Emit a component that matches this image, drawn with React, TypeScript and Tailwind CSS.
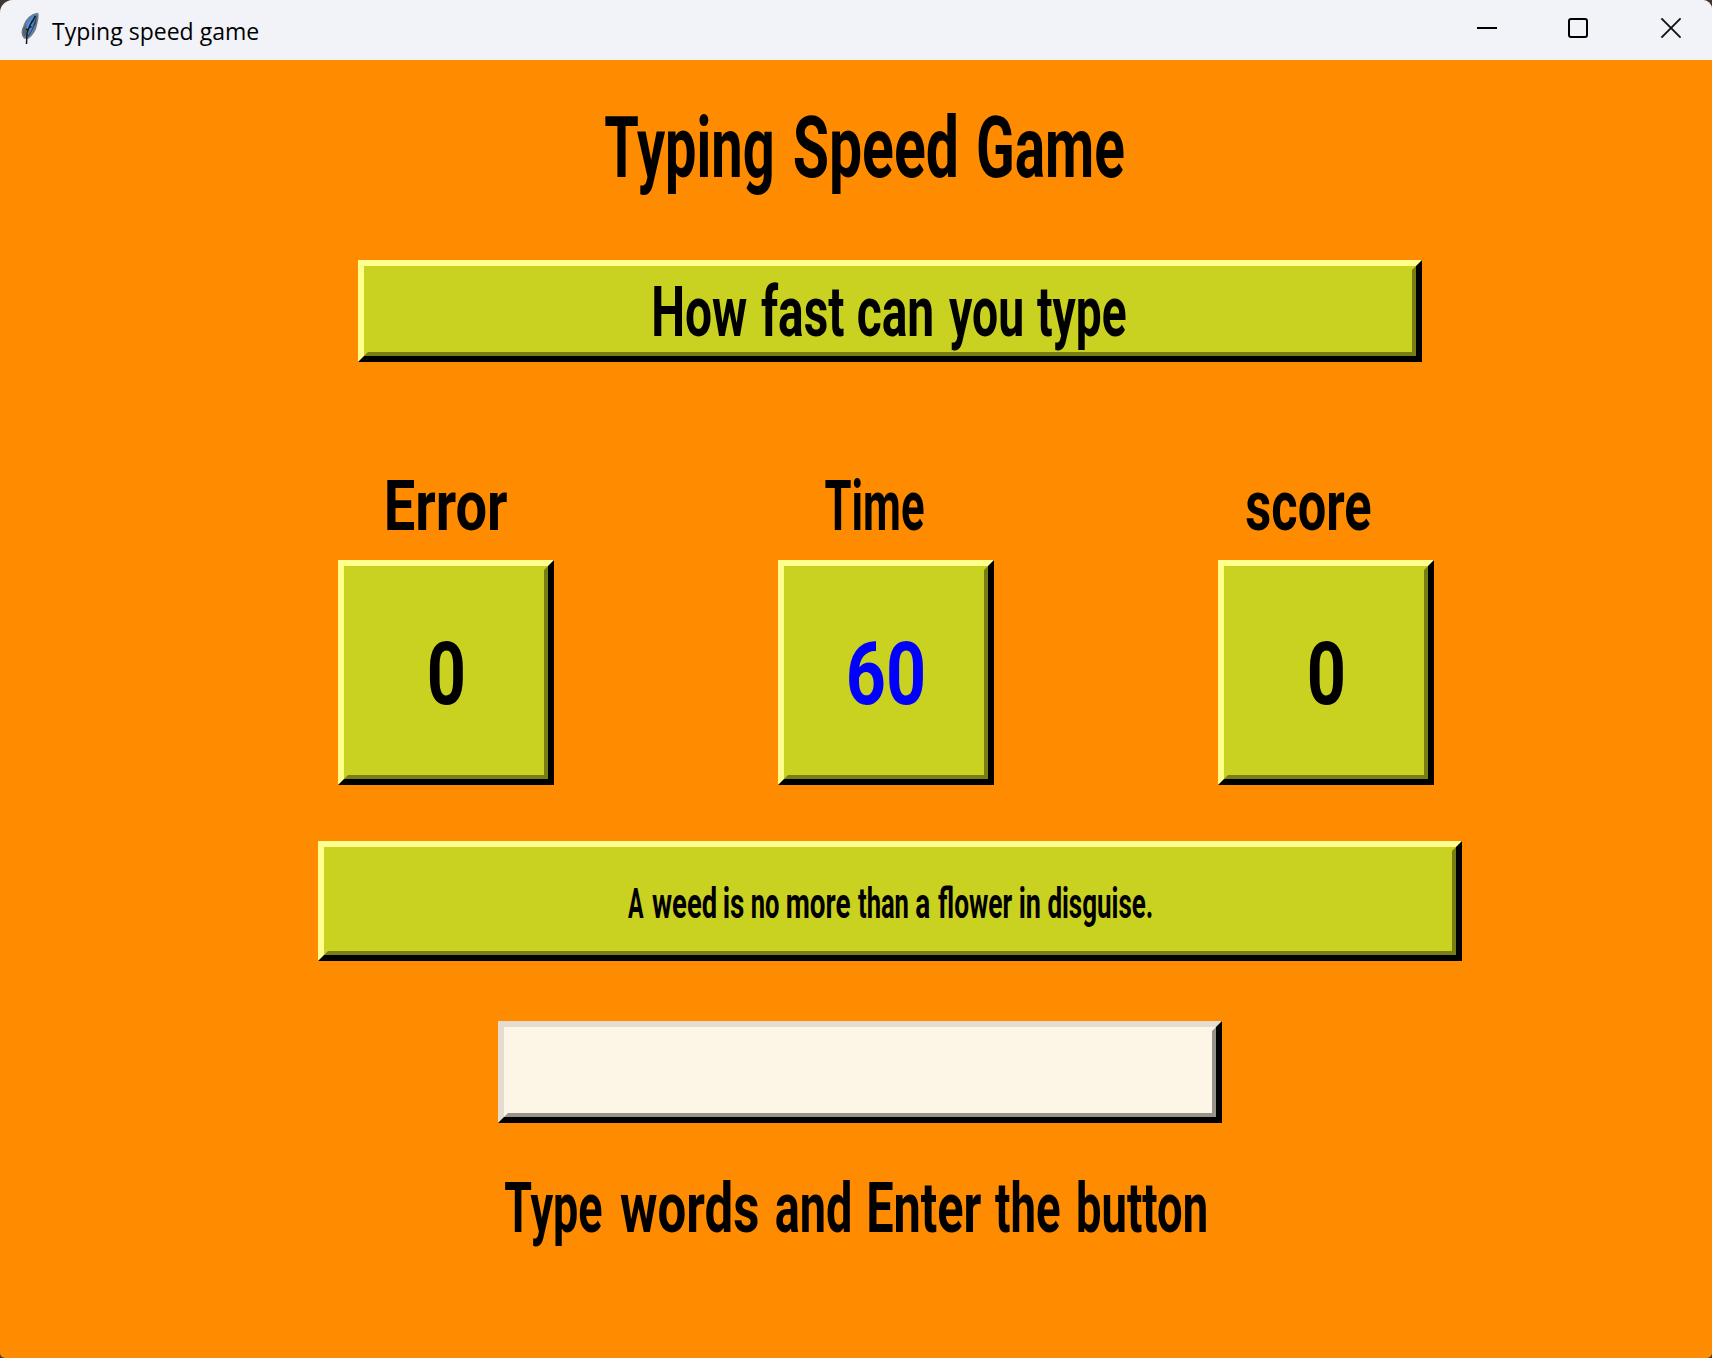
import { useLayoutEffect, useRef, useState, type ReactNode } from "react";

/** A word whose drawn letters are condensed to fill the width of its box. */
function Word({ children, className }: { children: string; className: string }) {
  const box = useRef<HTMLSpanElement>(null);
  const [fit, setFit] = useState({ scale: 1, shift: 0 });

  useLayoutEffect(() => {
    const el = box.current;
    const ctx = document.createElement("canvas").getContext("2d");
    if (!el || !ctx) return;
    const s = getComputedStyle(el);
    ctx.font = `${s.fontWeight} ${s.fontSize} ${s.fontFamily}`;
    const m = ctx.measureText(children);
    const ink = m.actualBoundingBoxLeft + m.actualBoundingBoxRight;
    const scale = el.getBoundingClientRect().width / ink;
    setFit({ scale, shift: m.actualBoundingBoxLeft * scale });
  }, [children]);

  return (
    <span ref={box} className={`block shrink-0 ${className}`}>
      <span
        className="inline-block origin-left whitespace-nowrap"
        style={{ transform: `translateX(${fit.shift}px) scaleX(${fit.scale})` }}
      >
        {children}
      </span>
    </span>
  );
}

function Panel({ children, className }: { children?: ReactNode; className: string }) {
  return (
    <div
      className={`border-6 border-t-[#ffff8e] border-l-[#ffff8e] border-r-black border-b-black ${className}`}
    >
      <div className="h-full border-4 border-t-[#cad221] border-l-[#cad221] border-r-[#797e14] border-b-[#797e14] bg-[#cad221]">
        {children}
      </div>
    </div>
  );
}

function Feather() {
  return (
    <svg className="ml-[20px] mt-[12px] h-[33px] w-[20px] shrink-0" viewBox="0 0 20 33" fill="none">
      <path d="M17.5 1.5C12 2 6 7 4 14C2 18 2 23 4.500 26L8 26C12 23 15.500 18 16.500 12C17.500 8 18.500 4 17.500 1.500Z" fill="#4b86ca" stroke="#747b82" strokeWidth="1.6" />
      <path d="M5 25L2.500 22L3 17L6 12L7 18L6 24Z" fill="#59636d" />
      <path d="M17 3L16 11L12.500 18L9 24L7 25L12 17L13.500 12L15 8Z" fill="#33465a" />
      <path d="M14 5L9 10L6 17L9 16L13 9Z" fill="#5c9be5" />
      <path d="M15.500 4L10 13L7 21L6.500 32M11 10L13 9M9 15L11.500 15M8 18L6 17" stroke="#15191e" strokeWidth="1.5" />
    </svg>
  );
}

function TitleBar() {
  return (
    <header className="flex h-[60px] items-start bg-[#f1f3f9] text-black">
      <Feather />
      <h1 className="ml-[12px] flex pt-[14.5px] font-['Open_Sans','Noto_Sans',sans-serif] text-[23.5px] leading-[33px]">
        <Word className="w-[206px]">Typing speed game</Word>
      </h1>
      <div className="ml-auto mr-[31px] flex gap-[71px] pt-[18px]">
        <button aria-label="Minimize">
          <svg className="h-5 w-5" viewBox="0 0 20 20">
            <path d="M0 10H20" stroke="#000" strokeWidth="2" />
          </svg>
        </button>
        <button aria-label="Maximize">
          <svg className="h-5 w-5" viewBox="0 0 20 20">
            <rect x="1" y="1" width="18" height="18" rx="2" fill="none" stroke="#000" strokeWidth="2" />
          </svg>
        </button>
        <button aria-label="Close" className="ml-[2px]">
          <svg className="h-5 w-5" viewBox="0 0 20 20">
            <path d="M.4 .4L19.600 19.600M19.600 .4L.4 19.600" stroke="#111" strokeWidth="1.9" />
          </svg>
        </button>
      </div>
    </header>
  );
}

export default function App() {
  return (
    <div className="h-[1358px] w-[1712px] bg-[#3b3838]">
      <div className="h-full overflow-hidden rounded-tl-[13px] rounded-tr-[9px] rounded-b-[5px] bg-[#ff8c00]">
        <TitleBar />
        <main className="flex flex-col items-start font-['Roboto','Liberation_Sans',sans-serif] font-bold text-black">
          <h2 className="mt-[57px] ml-[605px] flex h-[62px] gap-[22px] text-[86px] leading-[62px]">
            <Word className="w-[167px]">Typing</Word>
            <Word className="w-[162px]">Speed</Word>
            <Word className="w-[146px]">Game</Word>
          </h2>

          <Panel className="mt-[81px] ml-[358px] h-[102px] w-[1064px]">
            <p className="ml-[286px] flex pt-[17px] text-[70px] leading-[50px]">
              <Word className="w-[93px]">How</Word>
              <Word className="ml-[14px] w-[83px]">fast</Word>
              <Word className="ml-[14px] w-[74px]">can</Word>
              <Word className="ml-[17px] w-[73px]">you</Word>
              <Word className="ml-[15px] w-[89px]">type</Word>
            </p>
          </Panel>

          <div className="mt-[119px] ml-[338px] grid grid-cols-[216px_216px_216px] gap-x-[224px]">
            <section>
              <h3 className="ml-[49px] h-[50px] text-[70px] leading-[50px]">
                <Word className="w-[120px]">Error</Word>
              </h3>
              <Panel className="mt-[29px] h-[225px] w-[216px]">
                <p className="ml-[82px] pt-[73px] text-[87px] leading-[62px]">
                  <Word className="w-[33px]">0</Word>
                </p>
              </Panel>
            </section>
            <section>
              <h3 className="ml-[47px] h-[50px] text-[70px] leading-[50px]">
                <Word className="w-[99px]">Time</Word>
              </h3>
              <Panel className="mt-[29px] h-[225px] w-[216px]">
                <p className="ml-[61px] pt-[73px] text-[87px] leading-[62px] text-[#0000ff]">
                  <Word className="w-[74px]">60</Word>
                </p>
              </Panel>
            </section>
            <section>
              <h3 className="ml-[28px] h-[50px] text-[70px] leading-[50px]">
                <Word className="w-[125px]">score</Word>
              </h3>
              <Panel className="mt-[29px] h-[225px] w-[216px]">
                <p className="ml-[82px] pt-[73px] text-[87px] leading-[62px]">
                  <Word className="w-[33px]">0</Word>
                </p>
              </Panel>
            </section>
          </div>

          <Panel className="mt-[56px] ml-[318px] h-[120px] w-[1144px]">
            <p className="ml-[300px] flex gap-[8px] pt-[37.5px] text-[42px] leading-[30px]">
              <Word className="w-[16px]">A</Word>
              <Word className="w-[64px]">weed</Word>
              <Word className="w-[20px]">is</Word>
              <Word className="w-[27px]">no</Word>
              <Word className="w-[63px]">more</Word>
              <Word className="w-[50px]">than</Word>
              <Word className="w-[14px]">a</Word>
              <Word className="w-[74px]">flower</Word>
              <Word className="w-[20px]">in</Word>
              <Word className="w-[104px]">disguise.</Word>
            </p>
          </Panel>

          <div className="mt-[60px] ml-[498px] h-[102px] w-[724px] border-6 border-t-[#e4dcce] border-l-[#e4dcce] border-r-black border-b-black">
            <input
              aria-label="Typed words"
              className="block h-full w-full border-4 border-t-[#fdf5e6] border-l-[#fdf5e6] border-r-[#98938a] border-b-[#98938a] bg-[#fdf5e6] px-2 text-[42px] outline-none"
            />
          </div>

          <p className="mt-[60px] ml-[505px] flex h-[50px] text-[70px] leading-[50px]">
            <Word className="w-[97px]">Type</Word>
            <Word className="ml-[18px] w-[138px]">words</Word>
            <Word className="ml-[18px] w-[74px]">and</Word>
            <Word className="ml-[19px] w-[112px]">Enter</Word>
            <Word className="ml-[14px] w-[65px]">the</Word>
            <Word className="ml-[18px] w-[128px]">button</Word>
          </p>
        </main>
      </div>
    </div>
  );
}
